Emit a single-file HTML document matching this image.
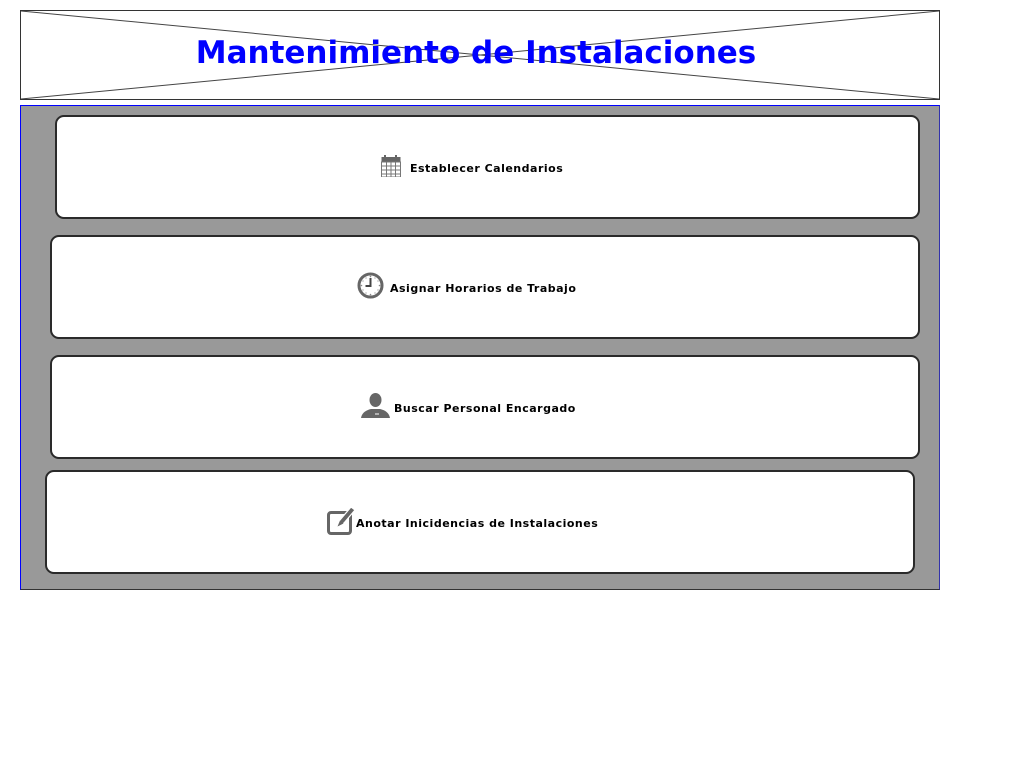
<!DOCTYPE html>
<html><head><meta charset="utf-8"><style>
body{margin:0;background:#fff;width:1024px;height:768px;position:relative;overflow:hidden;font-family:"DejaVu Sans","Liberation Sans",sans-serif}
.hdr{position:absolute;left:20px;top:10px;width:918px;height:88px;border:1px solid #333;background:#fff}
.hdr svg{position:absolute;left:0;top:0}
.title{position:absolute;left:0;top:0;width:918px;line-height:84px;text-align:center;color:#0000ff;font-weight:bold;font-size:31px;margin-left:-4px}
.panel{position:absolute;left:20px;top:105px;width:918px;height:483px;background:#999;border:1px solid #0000ff;border-bottom-color:#333;border-right-color:#33a}
.card{position:absolute;height:101px;background:#fff;border:2px solid #2a2a2a;border-radius:9px;box-sizing:border-box}
.lbl{position:absolute;font-weight:bold;font-size:11px;letter-spacing:0.5px;color:#000;white-space:nowrap}
.ic{position:absolute}
</style></head><body>
<div class="hdr"><svg width="918" height="88"><line x1="0" y1="0" x2="918" y2="88" stroke="#444" stroke-width="1"/><line x1="0" y1="88" x2="918" y2="0" stroke="#444" stroke-width="1"/></svg><div class="title">Mantenimiento de Instalaciones</div></div>
<div class="panel"></div>
<div class="card" style="left:55px;top:115px;width:865px;height:104px"></div>
<div class="card" style="left:50px;top:235px;width:870px;height:104px"></div>
<div class="card" style="left:50px;top:355px;width:870px;height:104px"></div>
<div class="card" style="left:45px;top:470px;width:870px;height:104px"></div>

<svg class="ic" style="left:381px;top:155px" width="20" height="22" viewBox="0 0 20 22"><rect x="0.5" y="2" width="19" height="5" fill="#666"/><rect x="3" y="0" width="2" height="4" fill="#666"/><rect x="14" y="0" width="2" height="4" fill="#666"/><rect x="0.5" y="7" width="19" height="15" fill="#fff" stroke="#777"/><path d="M5.5 7v15M10 7v15M14.5 7v15M0.5 11h19M0.5 15h19M0.5 19h19" stroke="#777" stroke-width="1"/></svg>
<div class="lbl" style="left:410px;top:162px">Establecer Calendarios</div>

<svg class="ic" style="left:357px;top:272px" width="27" height="27" viewBox="0 0 27 27"><circle cx="13.5" cy="13.5" r="11.5" fill="#fff" stroke="#666" stroke-width="3"/><path d="M13.5 6v8h-5" stroke="#444" stroke-width="2" fill="none"/><g fill="#888"><circle cx="13.5" cy="4.5" r=".8"/><circle cx="22.5" cy="13.5" r=".8"/><circle cx="13.5" cy="22.5" r=".8"/><circle cx="4.5" cy="13.5" r=".8"/><circle cx="18" cy="6" r=".6"/><circle cx="21" cy="9" r=".6"/><circle cx="21" cy="18" r=".6"/><circle cx="18" cy="21" r=".6"/><circle cx="9" cy="21" r=".6"/><circle cx="6" cy="18" r=".6"/><circle cx="6" cy="9" r=".6"/><circle cx="9" cy="6" r=".6"/></g></svg>
<div class="lbl" style="left:390px;top:282px">Asignar Horarios de Trabajo</div>

<svg class="ic" style="left:361px;top:393px" width="29" height="25" viewBox="0 0 29 25"><ellipse cx="14.5" cy="7" rx="6" ry="7" fill="#666"/><path d="M0 25c1-6 6-8 10-9h9c4 1 9 3 10 9z" fill="#666"/><path d="M14 21h4" stroke="#fff" stroke-width="1"/></svg>
<div class="lbl" style="left:394px;top:402px">Buscar Personal Encargado</div>

<svg class="ic" style="left:326px;top:505px" width="30" height="31" viewBox="0 0 30 31"><rect x="2.5" y="7.5" width="22" height="21" rx="2.5" fill="none" stroke="#666" stroke-width="3"/><path d="M11 22l3-7 11-13 4 3-11 13z" fill="#666" stroke="#fff" stroke-width="1.2"/><path d="M11.5 21.5l2.5-6 3.5 3z" fill="#666"/></svg>
<div class="lbl" style="left:356px;top:517px">Anotar Inicidencias de Instalaciones</div>
</body></html>
